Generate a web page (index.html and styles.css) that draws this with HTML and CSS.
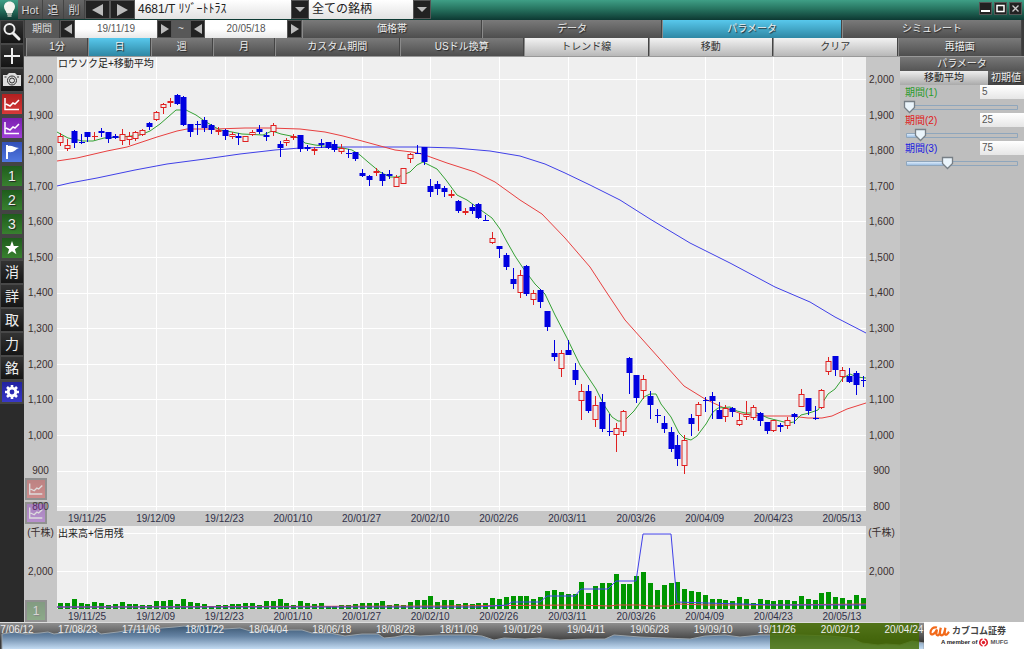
FILE: index.html
```
<!doctype html>
<html lang="ja">
<head>
  <meta charset="UTF-8">
  <meta name="viewport" content="width=device-width, initial-scale=1.0">
  <title>4681/T</title>
  <link rel="stylesheet" href="styles.css">
</head>
<body>
  <header class="titlebar">
    <button class="bulb" aria-label="ヒント">
      <svg width="13" height="17" viewBox="0 0 13 17"><path d="M6.500 .5C3 .5 1 3 1 5.800c0 2.700 2 3.700 2.500 6.200h6C10 9.500 12 8.500 12 5.800 12 3 10 .5 6.500 .5z" fill="#f4f4ee"/><path d="M4 13h5M4.500 15h4" stroke="#c9c9c0" stroke-width="1.500"/><path d="M3 5.500C3 4 4 2.500 5.500 2.500" stroke="#fff" fill="none"/></svg>
    </button>
    <button class="mini hot">Hot</button>
    <button class="mini">追</button>
    <button class="mini">削</button>
    <button class="nav" aria-label="前の銘柄"><i class="tri left big"></i></button>
    <button class="nav" aria-label="次の銘柄"><i class="tri right big"></i></button>
    <select class="combo code" aria-label="銘柄"><option>4681/T &#xFF98;&#xFF7F;&#xFF9E;&#xFF70;&#xFF84;&#xFF84;&#xFF97;&#xFF7D;</option></select>
    <select class="combo group" aria-label="銘柄グループ"><option>全ての銘柄</option></select>
    <div class="window">
      <button aria-label="最小化"><svg width="9" height="9"><path d="M0 7h9" stroke="#fff" stroke-width="2"/></svg></button>
      <button aria-label="最大化"><svg width="9" height="9"><path d="M1 1.500h7v6h-7z" fill="none" stroke="#fff" stroke-width="1.500"/></svg></button>
      <button aria-label="閉じる"><svg width="9" height="9"><path d="M1.500 1.500l6 6M7.500 1.500l-6 6" stroke="#ccc" stroke-width="1.300"/></svg></button>
    </div>
  </header>

  <div class="main">
    <nav class="tools">
      <button aria-label="検索"><svg viewBox="0 0 20 20"><circle cx="7.500" cy="7" r="5" fill="none" stroke="#eee" stroke-width="2"/><path d="M11 11l6 6" stroke="#eee" stroke-width="3" stroke-linecap="round"/></svg></button>
      <button aria-label="追加"><svg viewBox="0 0 20 20"><path d="M10 2v16M2 10h16" stroke="#eee" stroke-width="2"/></svg></button>
      <button aria-label="カメラ"><svg viewBox="0 0 20 20"><path d="M1 5h4l2-2h6l2 2h4v11H1z" fill="#ddd"/><circle cx="10" cy="10.500" r="4.500" fill="none" stroke="#333"/><circle cx="10" cy="10.500" r="2.500" fill="none" stroke="#333"/><path d="M2.500 7h2M15 7h2" stroke="#333"/></svg></button>
      <button class="red" aria-label="チャート1"><svg viewBox="0 0 20 20"><path d="M3 4v11.500h14M4 10l4 2 3-3 2 1 4-4" fill="none" stroke="#fff" stroke-width="1.500"/></svg></button>
      <button class="purple" aria-label="チャート2"><svg viewBox="0 0 20 20"><path d="M3 4v11.500h14M4 10l4 2 3-3 2 1 4-4" fill="none" stroke="#fff" stroke-width="1.500"/></svg></button>
      <button class="blue" aria-label="フラグ"><svg viewBox="0 0 20 20"><path d="M5 3v14" stroke="#fff" stroke-width="2"/><path d="M6 4c4-1 6 1.500 11 2-4 1-4 5-11 4z" fill="#fff"/></svg></button>
      <button class="green">1</button>
      <button class="green">2</button>
      <button class="green">3</button>
      <button class="green" aria-label="お気に入り"><svg viewBox="0 0 20 20"><path d="M10 3l1.800 5 5.200.1-4.100 3.100 1.500 5-4.400-3-4.400 3 1.500-5L3 8.100 8.200 8z" fill="#fff"/></svg></button>
      <button class="kanji">消</button>
      <button class="kanji">詳</button>
      <button class="kanji">取</button>
      <button class="kanji">力</button>
      <button class="kanji">銘</button>
      <button class="navy" aria-label="設定"><svg viewBox="0 0 20 20"><circle cx="10" cy="10" r="3.800" fill="none" stroke="#fff" stroke-width="2.800"/><path d="M10 3v3M10 14v3M3 10h3M14 10h3M5 5l2 2M13 13l2 2M15 5l-2 2M7 13l-2 2" stroke="#fff" stroke-width="2.600"/></svg></button>
    </nav>

    <div class="work">
      <div class="row period">
        <label class="caption" for="from">期間</label>
        <button class="step" aria-label="開始日を戻す"><i class="tri left"></i></button>
        <input class="date" id="from" value="19/11/19">
        <button class="step" aria-label="開始日を進める"><i class="tri right"></i></button>
        <span class="wave">~</span>
        <button class="step" aria-label="終了日を戻す"><i class="tri left"></i></button>
        <input class="date" aria-label="終了日" value="20/05/18">
        <button class="step" aria-label="終了日を進める"><i class="tri right"></i></button>
        <div class="tabs">
          <button>価格帯</button>
          <button>データ</button>
          <button class="on">パラメータ</button>
          <button>シミュレート</button>
        </div>
      </div>
      <div class="row units">
        <button>1分</button>
        <button class="on">日</button>
        <button>週</button>
        <button>月</button>
        <button>カスタム期間</button>
        <button>USドル換算</button>
        <button class="light">トレンド線</button>
        <button class="light">移動</button>
        <button class="light">クリア</button>
        <button>再描画</button>
      </div>

      <div class="content">
        <div class="charts">
          <div class="axis price prices"></div>
          <div class="plot">
            <svg class="price-svg" viewBox="57 57 809 454" preserveAspectRatio="none"></svg>
            <h2>ロウソク足+移動平均</h2>
          </div>
          <div class="axis price right prices"></div>
          <div class="dates"></div>
          <div class="axis volume"><span>(千株)</span><span>2,000</span></div>
          <div class="plot second">
            <svg class="volume-svg" viewBox="57 526 809 83" preserveAspectRatio="none"></svg>
            <h2>出来高+信用残</h2>
          </div>
          <div class="axis volume right"><span>(千株)</span><span>2,000</span></div>
          <div class="dates"></div>
          <div class="ghosts">
            <button class="red" aria-label="チャート1を表示"><svg viewBox="0 0 20 20"><path d="M3 4v11.500h14M4 10l4 2 3-3 2 1 4-4" fill="none" stroke="#fff" stroke-width="1.500"/></svg></button>
            <button class="purple" aria-label="チャート2を表示"><svg viewBox="0 0 20 20"><path d="M3 4v11.500h14M4 10l4 2 3-3 2 1 4-4" fill="none" stroke="#fff" stroke-width="1.500"/></svg></button>
            <button class="green last">1</button>
          </div>
        </div>

        <aside class="params">
          <h2>パラメータ</h2>
          <div class="params-head">
            <strong>移動平均</strong>
            <button>初期値</button>
          </div>
          <div class="param g">
            <label for="p1">期間(1)</label><input class="num" id="p1" value="5">
            <input type="range" aria-label="期間(1)" min="5" max="200" value="5">
          </div>
          <div class="param r">
            <label for="p2">期間(2)</label><input class="num" id="p2" value="25">
            <input type="range" aria-label="期間(2)" min="5" max="200" value="25">
          </div>
          <div class="param b">
            <label for="p3">期間(3)</label><input class="num" id="p3" value="75">
            <input type="range" aria-label="期間(3)" min="5" max="200" value="75">
          </div>
        </aside>
      </div>
    </div>
  </div>

  <footer class="footer">
    <div class="timeline">
      <svg viewBox="0 623 924 26" preserveAspectRatio="none">
        <defs>
          <linearGradient id="sky" gradientUnits="userSpaceOnUse" x1="0" y1="623" x2="0" y2="649">
            <stop offset="0" stop-color="#2f4a64"/>
            <stop offset=".5" stop-color="#6482a2"/>
            <stop offset="1" stop-color="#c3dbf2"/>
          </linearGradient>
        </defs>
        <path d="M2 650V634L14 632 26 634 40 633 48 632 54 634 78 631 96 631 101 634 118 632 130 630 150 629 162 628 175 627 184 626 195 627 205 625 214 626 224 629 240 628 254 632 268 629 282 631 290 630 302 630 312 633 330 633 345 636 362 634 378 634 384 638 395 637 405 635 420 636 440 635 470 635 482 636 494 640 504 638 525 639 540 638 560 640 585 639 605 639 614 635 640 637 665 638 690 639 705 636 725 635 740 637 760 635 780 635 800 635 830 636 850 638 862 643 878 645 886 644 900 645 912 641 924 643V650z" fill="url(#sky)" stroke="#9aa3aa"/>
      </svg>
      <div class="selection"></div>
      <div class="years"></div>
    </div>
    <div class="brand">
      <div class="brand-main">
        <svg width="21" height="11" viewBox="0 0 21 11"><path d="M8 1.500C4 .5 1.500 3.500 1.500 6.500S5 9.500 8 3.500C7 8 7 9.500 9 9.300c2-.3 2-5 2.800-7.500-1.500 5-.8 7.500 1 7.500 2 0 3-4 3.600-7.500-1 5-1 7 .6 7 1.300 0 2.200-2 3-3" fill="none" stroke="#f26a1b" stroke-width="2.200"/></svg>
        <b>カブコム証券</b>
      </div>
      <div class="brand-sub">A member of <svg width="9" height="9" viewBox="0 0 9 9"><circle cx="4.500" cy="4.500" r="1.700" fill="#e0202c"/><path d="M3.500 1A3.600 3.600 0 0 0 3.500 8M5.500 1A3.600 3.600 0 0 1 5.500 8" fill="none" stroke="#e0202c" stroke-width="1.600"/></svg> <span>MUFG</span></div>
    </div>
  </footer>
  <script src="chart.js"></script>
</body>
</html>
```
FILE: styles.css
```
* {
  box-sizing: border-box;
}
body {
  display: flex;
  flex-direction: column;
  height: 100vh;
  margin: 0;
  overflow: hidden;
  background: #2b2b2b;
  font-family: "Liberation Sans", "Noto Sans CJK JP", sans-serif;
  font-size: 10px;
  line-height: 14px;
}
button, input, select {
  margin: 0;
  padding: 0;
  border: 0;
  border-radius: 0;
  font: inherit;
}
button {
  display: flex;
  align-items: center;
  justify-content: center;
  color: #eee;
  background: linear-gradient(#7a7a7a, #4e4e4e);
  text-shadow: 1px 1px 1px #222;
}
h2 {
  margin: 0;
  font-size: 10px;
  font-weight: normal;
}

/* title bar */
.titlebar {
  display: flex;
  align-items: stretch;
  height: 20px;
  padding-bottom: 1px;
  background: linear-gradient(#3f9f86, #277460 45%, #0d3832);
}
.titlebar .bulb {
  width: 18px;
  background: none;
}
.titlebar .mini {
  width: 21px;
  border-right: 1px solid #444;
  background: linear-gradient(#666, #4c4c4c);
  color: #d8d8d8;
  font-size: 11px;
}
.titlebar .hot {
  width: 25px;
}
.nav {
  width: 25px;
  border: 1px solid #555;
  background: #222;
}
.tri {
  border: 5px solid transparent;
}
.tri.left {
  border-left: 0;
  border-right: 8px solid #bbb;
}
.tri.right {
  border-right: 0;
  border-left: 8px solid #bbb;
}
.tri.big {
  border-top-width: 6px;
  border-bottom-width: 6px;
}
.tri.big.left {
  border-right-width: 11px;
}
.tri.big.right {
  border-left-width: 11px;
}
.combo {
  appearance: none;
  padding: 0 20px 1px 3px;
  color: #222;
  font-size: 12px;
  background:
    url("data:image/svg+xml,%3Csvg xmlns='http://www.w3.org/2000/svg' width='18' height='19'%3E%3Cpath d='M0 0h18v19H0z' fill='%23555'/%3E%3Cpath d='M1 1h16v17H1z' fill='%23222'/%3E%3Cpath d='M4 7h10l-5 5z' fill='%23bbb'/%3E%3C/svg%3E") right top no-repeat,
    linear-gradient(#fff, #e2e2e2);
}
.combo.code {
  width: 174px;
}
.combo.group {
  width: 122px;
}
.window {
  display: flex;
  gap: 2px;
  margin-left: auto;
  padding: 2px 2px 4px 0;
}
.window button {
  width: 13px;
  border: 1px solid #555;
  background: #222;
}

/* left tools */
.main {
  display: flex;
  flex: 1;
  min-height: 0;
}
.tools {
  width: 24px;
  background: #2b2b2b;
}
.tools button {
  width: 24px;
  height: 24px;
  border: 1px solid #484848;
  background: linear-gradient(#333, #151515);
  font-size: 14px;
}
.tools svg, .ghosts svg {
  width: 20px;
  height: 20px;
}
.tools .red, .ghosts .red {
  border: 2px solid #444;
  background: linear-gradient(#b02020, #d83838);
}
.tools .purple, .ghosts .purple {
  border: 2px solid #444;
  background: linear-gradient(#7a20b0, #a040d8);
}
.tools .blue {
  border: 2px solid #444;
  background: linear-gradient(#3350b8, #5078e0);
}
.tools .green, .ghosts .green {
  border: 2px solid #444;
  background: linear-gradient(#1f5c1c, #38802f);
}
.tools .navy {
  border: 2px solid #444;
  background: linear-gradient(#2222a0, #3838c8);
}

/* toolbar rows */
.work {
  display: flex;
  flex-direction: column;
  flex: 1;
  min-width: 0;
}
.row {
  display: flex;
  flex: none;
  background: #3c3c3c;
}
.period {
  height: 18px;
  padding: 0 2px 0 1px;
}
.caption {
  width: 34px;
  margin-right: 1px;
  color: #ddd;
  line-height: 17px;
  text-align: center;
  background: #585858;
}
.step {
  width: 15px;
  border: 1px solid #555;
  background: #222;
}
.date {
  width: 82px;
  color: #555;
  text-align: center;
  background: linear-gradient(#fff 50%, #e8e8e8);
}
.wave {
  width: 18px;
  color: #ddd;
  line-height: 18px;
  text-align: center;
  background: #585858;
}
.tabs {
  display: grid;
  grid-template-columns: repeat(4, 1fr);
  flex: 1;
}
.tabs button, .units button {
  border-left: 1px solid #8a8a8a;
  border-right: 1px solid #444;
}
.row.units {
  display: grid;
  grid-template-columns: repeat(4, 1fr) repeat(6, 2fr);
  height: 18px;
  padding: 0 2px;
}
.row button.on {
  background: linear-gradient(#58c8ec, #2e87a4);
}
.row button.light {
  color: #333;
  background: linear-gradient(#f2f2f2, #b8b8b8);
  text-shadow: none;
}

/* charts */
.content {
  display: flex;
  flex: 1;
  min-height: 0;
  border-top: 1px solid #999;
  background: #bebebe;
}
.charts {
  display: grid;
  grid-template-columns: 33px 1fr 34px;
  grid-template-rows: 1fr 15px 83px 13px;
  flex: 1;
  position: relative;
  min-width: 0;
  background: #c6c6c6;
}
.plot {
  position: relative;
  grid-column: 2;
  min-height: 0;
  background: #efefef;
}
.plot svg {
  display: block;
  width: 100%;
  height: 100%;
}
.plot h2 {
  position: absolute;
  top: 0;
  left: 1px;
  color: #222;
}
.second h2 {
  top: 1px;
}
.axis {
  display: flex;
  flex-direction: column;
  justify-content: space-between;
  grid-column: 1;
  color: #3a2e2e;
  text-align: center;
}
.axis.right {
  grid-column: 3;
  padding-right: 3px;
}
.axis.price {
  grid-row: 1 / 3;
  padding-top: 16px;
  padding-bottom: 12px;
}
.axis.price + .plot {
  grid-row: 1;
}
.axis.volume {
  grid-row: 3;
  justify-content: flex-start;
  gap: 25px;
  white-space: nowrap;
}
.second {
  grid-row: 3;
}
.dates {
  display: flex;
  justify-content: space-between;
  grid-column: 2;
  padding: 0 4px 0 10px;
  color: #303048;
  line-height: 16px;
}
.dates span, .years span {
  width: 40px;
  text-align: center;
}
.ghosts {
  display: flex;
  flex-direction: column;
  gap: 2px;
  position: absolute;
  bottom: 0;
  left: 1px;
  opacity: .4;
}
.ghosts button {
  width: 22px;
  height: 22px;
  font-size: 12px;
}
.ghosts .last {
  margin-top: 74px;
}
.grid {
  stroke: #fff;
  fill: none;
}
.ma {
  fill: none;
  stroke-width: 1;
}
.ma.g {
  stroke: #35a135;
}
.ma.r {
  stroke: #e84040;
}
.ma.b {
  stroke: #4040e8;
}
.up {
  fill: #efefef;
  stroke: #e02020;
}
.down {
  fill: #0000e0;
  stroke: #0000e0;
}
.bar {
  fill: #009600;
}

/* parameters */
.params {
  width: 124px;
  background: #bebebe;
}
.params h2 {
  height: 14px;
  color: #eee;
  line-height: 13px;
  text-align: center;
  text-shadow: 1px 1px 1px #222;
  background: linear-gradient(#777, #555);
}
.params-head {
  display: flex;
  height: 14px;
}
.params-head strong {
  flex: 1;
  color: #222;
  font-weight: normal;
  text-align: center;
  background: linear-gradient(#eee, #aaa);
}
.params-head button {
  width: 36px;
  background: linear-gradient(#666, #444);
}
.param {
  display: grid;
  grid-template-columns: 1fr 44px;
  height: 28px;
  padding-left: 5px;
}
.param label {
  line-height: 15px;
}
.param .num {
  width: 44px;
  height: 14px;
  padding-left: 2px;
  color: #555;
  background: linear-gradient(#fff, #e6e6e6);
}
.param.g label {
  color: #2a9a2a;
}
.param.r label {
  color: #e02020;
}
.param.b label {
  color: #2020e0;
}
.param input[type=range] {
  grid-column: 1 / 3;
  appearance: none;
  width: 118px;
  height: 14px;
  margin-left: -2px;
  background: none;
}
.param input[type=range]::-webkit-slider-runnable-track {
  height: 14px;
  background:
    url("data:image/svg+xml,%3Csvg xmlns='http://www.w3.org/2000/svg' width='112' height='14'%3E%3Cpath d='M.5 5.500h111v4H.5z' fill='none' stroke='%238fa6bc'/%3E%3C/svg%3E") 3px 0 no-repeat,
    linear-gradient(#dcebfa, #9fc0e4) 4px 6px / var(--fill, 0) 3px no-repeat;
}
.param input[type=range]::-webkit-slider-thumb {
  appearance: none;
  width: 13px;
  height: 14px;
  background: url("data:image/svg+xml,%3Csvg xmlns='http://www.w3.org/2000/svg' width='13' height='14'%3E%3Cpath d='M1.500 1.500h10v6l-5 5-5-5z' fill='%23eaf4fb' stroke='%23777f86' stroke-width='1.300'/%3E%3C/svg%3E");
}

/* timeline */
.footer {
  display: flex;
  height: 27px;
}
.timeline {
  flex: 1;
  position: relative;
  min-width: 0;
  overflow: hidden;
  border-top: 1px solid #ddd;
  background: linear-gradient(#8e8e8e, #3c3c3c 70%);
}
.timeline svg {
  display: block;
  width: 100%;
  height: 100%;
}
.selection {
  position: absolute;
  top: 0;
  bottom: 0;
  left: 83.3%;
  width: 16.2%;
  background: rgba(68, 110, 0, .82);
}
.years {
  display: flex;
  justify-content: space-between;
  position: absolute;
  top: 0;
  left: 0;
  right: 0;
  color: #eee;
}
.years span:first-child {
  width: 34px;
}
.brand {
  width: 100px;
  padding: 2px 0 0 5px;
  background: #fff;
}
.brand-main {
  display: flex;
  align-items: center;
  gap: 2px;
  height: 14px;
  color: #444;
}
.brand-main b {
  font-size: 9px;
}
.brand-sub {
  display: flex;
  align-items: center;
  gap: 2px;
  padding-left: 12px;
  height: 8px;
  color: #222;
  font-size: 6px;
  font-weight: bold;
}
.brand-sub span {
  color: #555;
}
```
FILE: chart.js
```
const START = 60
const STEP = 6.86

// high, open/close top, open/close bottom, low, 1 = up
const candles = [
  [133,136,142,145,1],[139,145,148,150,1],[130,131,142,147,0],[134,142,142,143,0],[132,132,136,141,0],
  [132,136,136,139,1],[128,131,132,136,0],[132,132,138,142,0],[134,136,137,138,0],[129,134,140,144,1],
  [132,136,139,144,1],[131,132,138,140,1],[129,130,134,135,1],[122,123,126,129,0],[111,112,119,120,1],
  [103,104,107,113,1],[98,101,102,106,1],[94,95,103,104,0],[96,97,124,125,0],[124,124,131,136,0],
  [121,124,124,134,0],[117,120,127,131,0],[124,125,129,133,0],[127,130,131,134,1],[129,130,135,139,0],
  [132,134,136,138,1],[133,136,137,144,0],[136,136,141,141,1],[130,132,134,135,1],[125,129,131,133,0],
  [132,135,136,140,0],[123,125,131,135,1],[141,144,147,156,0],[138,140,142,145,1],[134,136,137,139,1],
  [135,135,148,151,0],[145,147,148,150,0],[147,149,150,154,1],[139,143,144,147,0],[142,142,147,148,0],
  [140,144,149,151,0],[144,148,151,153,1],[149,153,153,157,0],[152,152,158,160,0],[169,173,175,176,0],
  [175,176,179,185,0],[168,171,172,175,1],[172,174,180,185,0],[170,174,175,178,0],[175,177,186,186,1],
  [168,168,183,183,1],[153,154,158,162,1],[145,153,153,153,0],[147,147,161,164,0],[179,186,191,196,0],
  [181,184,188,194,0],[186,188,191,196,0],[190,194,195,197,1],[200,201,210,212,0],[208,211,212,214,1],
  [204,207,210,213,0],[203,204,217,218,0],[215,220,220,220,0],[232,238,242,243,1],[246,246,248,257,0],
  [253,255,266,269,0],[268,279,283,288,0],[270,275,292,297,1],[265,266,293,295,0],[290,293,299,304,1],
  [289,290,301,307,0],[311,311,326,330,0],[340,353,356,360,0],[350,353,368,376,1],[340,350,354,354,0],
  [363,370,379,384,0],[384,391,400,419,1],[385,391,410,412,0],[396,405,419,426,1],[394,402,428,431,0],
  [414,431,431,435,0],[423,428,434,451,1],[410,411,431,435,1],[357,358,372,393,0],[375,375,397,402,0],
  [375,379,390,398,1],[391,396,404,418,0],[409,415,415,422,0],[416,423,428,432,0],[427,432,448,451,0],
  [435,445,458,465,0],[435,440,465,473,1],[414,418,423,435,0],[402,404,415,430,1],[397,400,400,411,0],
  [392,396,400,418,0],[402,410,418,418,0],[405,408,416,421,1],[407,408,411,416,0],[413,420,424,425,1],
  [401,414,416,419,1],[405,407,417,419,1],[412,413,420,425,0],[422,422,430,433,0],[420,420,430,431,1],
  [423,425,426,431,0],[417,420,425,428,1],[413,414,416,423,0],[389,394,406,406,1],[398,398,410,414,0],
  [406,418,418,419,0],[389,390,407,408,1],[357,361,371,374,1],[356,356,369,375,0],[367,370,376,381,1],
  [368,376,381,382,0],[371,373,384,394,0],[376,380,380,386,0]
]

const volumes = [
  6,6,10,6,5,7,6,4,5,7,5,5,4,4,8,8,9,5,10,7,6,5,3,4,4,5,5,6,6,4,8,8,10,6,4,8,6,5,6,3,
  3,4,4,5,6,6,6,8,4,5,4,7,9,9,13,7,9,9,5,6,5,6,6,11,10,12,13,13,13,10,12,18,19,17,15,15,27,16,23,26,
  26,35,25,25,33,37,26,19,24,26,27,20,18,17,14,10,10,9,8,12,10,6,10,9,8,9,9,8,13,10,9,16,17,12,11,9,14,11
]

const averages = {
  b: '57,186 70,183 97,178 135,170 167,164 205,159 240,154 275,150 300,148 340,147 420,147 455,148 490,151 520,156 545,164 565,173 590,185 620,200 650,219 690,243 730,263 775,287 810,302 835,317 866,333',
  r: '57,161 77,158 107,151 127,147 157,137 177,131 187,129 215,129 245,128 270,128 300,129 325,132 343,136 362,141 395,150 412,152 422,154 447,163 475,172 495,182 520,200 542,214 565,238 590,267 605,290 625,320 650,348 684,386 705,399 722,407 742,414 762,416 790,416 808,418 822,418 832,416 847,409 866,403',
  g: '57,132 68,138 83,141 93,141 104,138 122,137 140,135 150,131 160,124 176,110 186,110 196,115 206,122 220,130 232,132 242,134 263,135 272,131 281,134 291,136 299,138 305,143 315,145 324,146 343,148 352,150 360,155 368,162 380,172 390,177 398,177 410,172 417,165 423,162 437,169 446,180 457,195 467,200 478,208 492,218 500,229 507,242 515,256 523,268 535,284 545,294 555,315 567,338 580,365 596,389 604,405 612,417 618,421 624,421 634,411 644,397 650,394 656,394 661,404 671,417 679,433 684,438 691,440 697,436 706,424 713,412 718,408 730,407 737,411 745,413 757,413 768,418 780,421 788,423 794,422 801,415 809,413 818,410 828,394 835,389 843,378 850,374 857,377 866,378'
}

const margin = {
  b: '57,607 478,607 507,605 512,602 540,602 547,596 575,596 581,589 608,589 616,581 636,581 643,534 671,534 677,602 706,603 775,605 866,605',
  r: '57,607 440,606 575,605 610,606 617,605 640,605 650,606 670,606 677,604 708,605 775,605 866,604'
}

const days = ['19/11/25', '19/12/09', '19/12/23', '20/01/10', '20/01/27', '20/02/10', '20/02/26', '20/03/11', '20/03/26', '20/04/09', '20/04/23', '20/05/13']
const years = ['7/06/12', '17/08/23', '17/11/06', '18/01/22', '18/04/04', '18/06/18', '18/08/28', '18/11/09', '19/01/29', '19/04/11', '19/06/28', '19/09/10', '19/11/26', '20/02/12', '20/04/24']

const xAt = i => Math.round(START + i * STEP)
const line = (cls, points) => `<polyline class="ma ${cls}" points="${points}"/>`
const spans = list => list.map(text => `<span>${text}</span>`).join('')

function grid(ys, top, bottom) {
  const v = days.map((d, i) => `M${xAt(4 + i * 10) + .5} ${top}V${bottom}`).join('')
  const h = ys.map(y => `M57 ${Math.round(y) + .5}H866`).join('')
  return `<path class="grid" d="${v}${h}"/>`
}

function candle([high, top, bottom, low, up], i) {
  const x = xAt(i)
  // open equals close: only a dash
  const body = bottom > top
    ? `<rect x="${x - 2}" y="${top + .5}" width="5" height="${bottom - top}"/>`
    : `<path d="M${x - 2} ${top + .5}h6"/>`
  return `<g class="${up ? 'up' : 'down'}"><path d="M${x + .5} ${high}V${low + 1}"/>${body}</g>`
}

const prices = Array.from({ length: 13 }, (v, i) => 2000 - i * 100)
document.querySelector('.price-svg').innerHTML =
  grid(prices.map((p, i) => 79 + i * 35.6), 57, 511) +
  line('b', averages.b) + line('r', averages.r) + line('g', averages.g) +
  candles.map(candle).join('')

document.querySelector('.volume-svg').innerHTML =
  grid([533, 571], 526, 609) +
  volumes.map((v, i) => `<rect class="bar" x="${xAt(i) - 2}" y="${609 - v}" width="5" height="${v}"/>`).join('') +
  line('r', margin.r) + line('b', margin.b)

document.querySelectorAll('.prices').forEach(el => el.innerHTML = spans(prices.map(p => p.toLocaleString('en-US'))))
document.querySelectorAll('.dates').forEach(el => el.innerHTML = spans(days))
document.querySelector('.years').innerHTML = spans(years)

document.querySelectorAll('input[type=range]').forEach(el => {
  const fill = () => el.style.setProperty('--fill', (el.value - el.min) / (el.max - el.min) * 90 + '%')
  el.addEventListener('input', fill)
  fill()
})
```
